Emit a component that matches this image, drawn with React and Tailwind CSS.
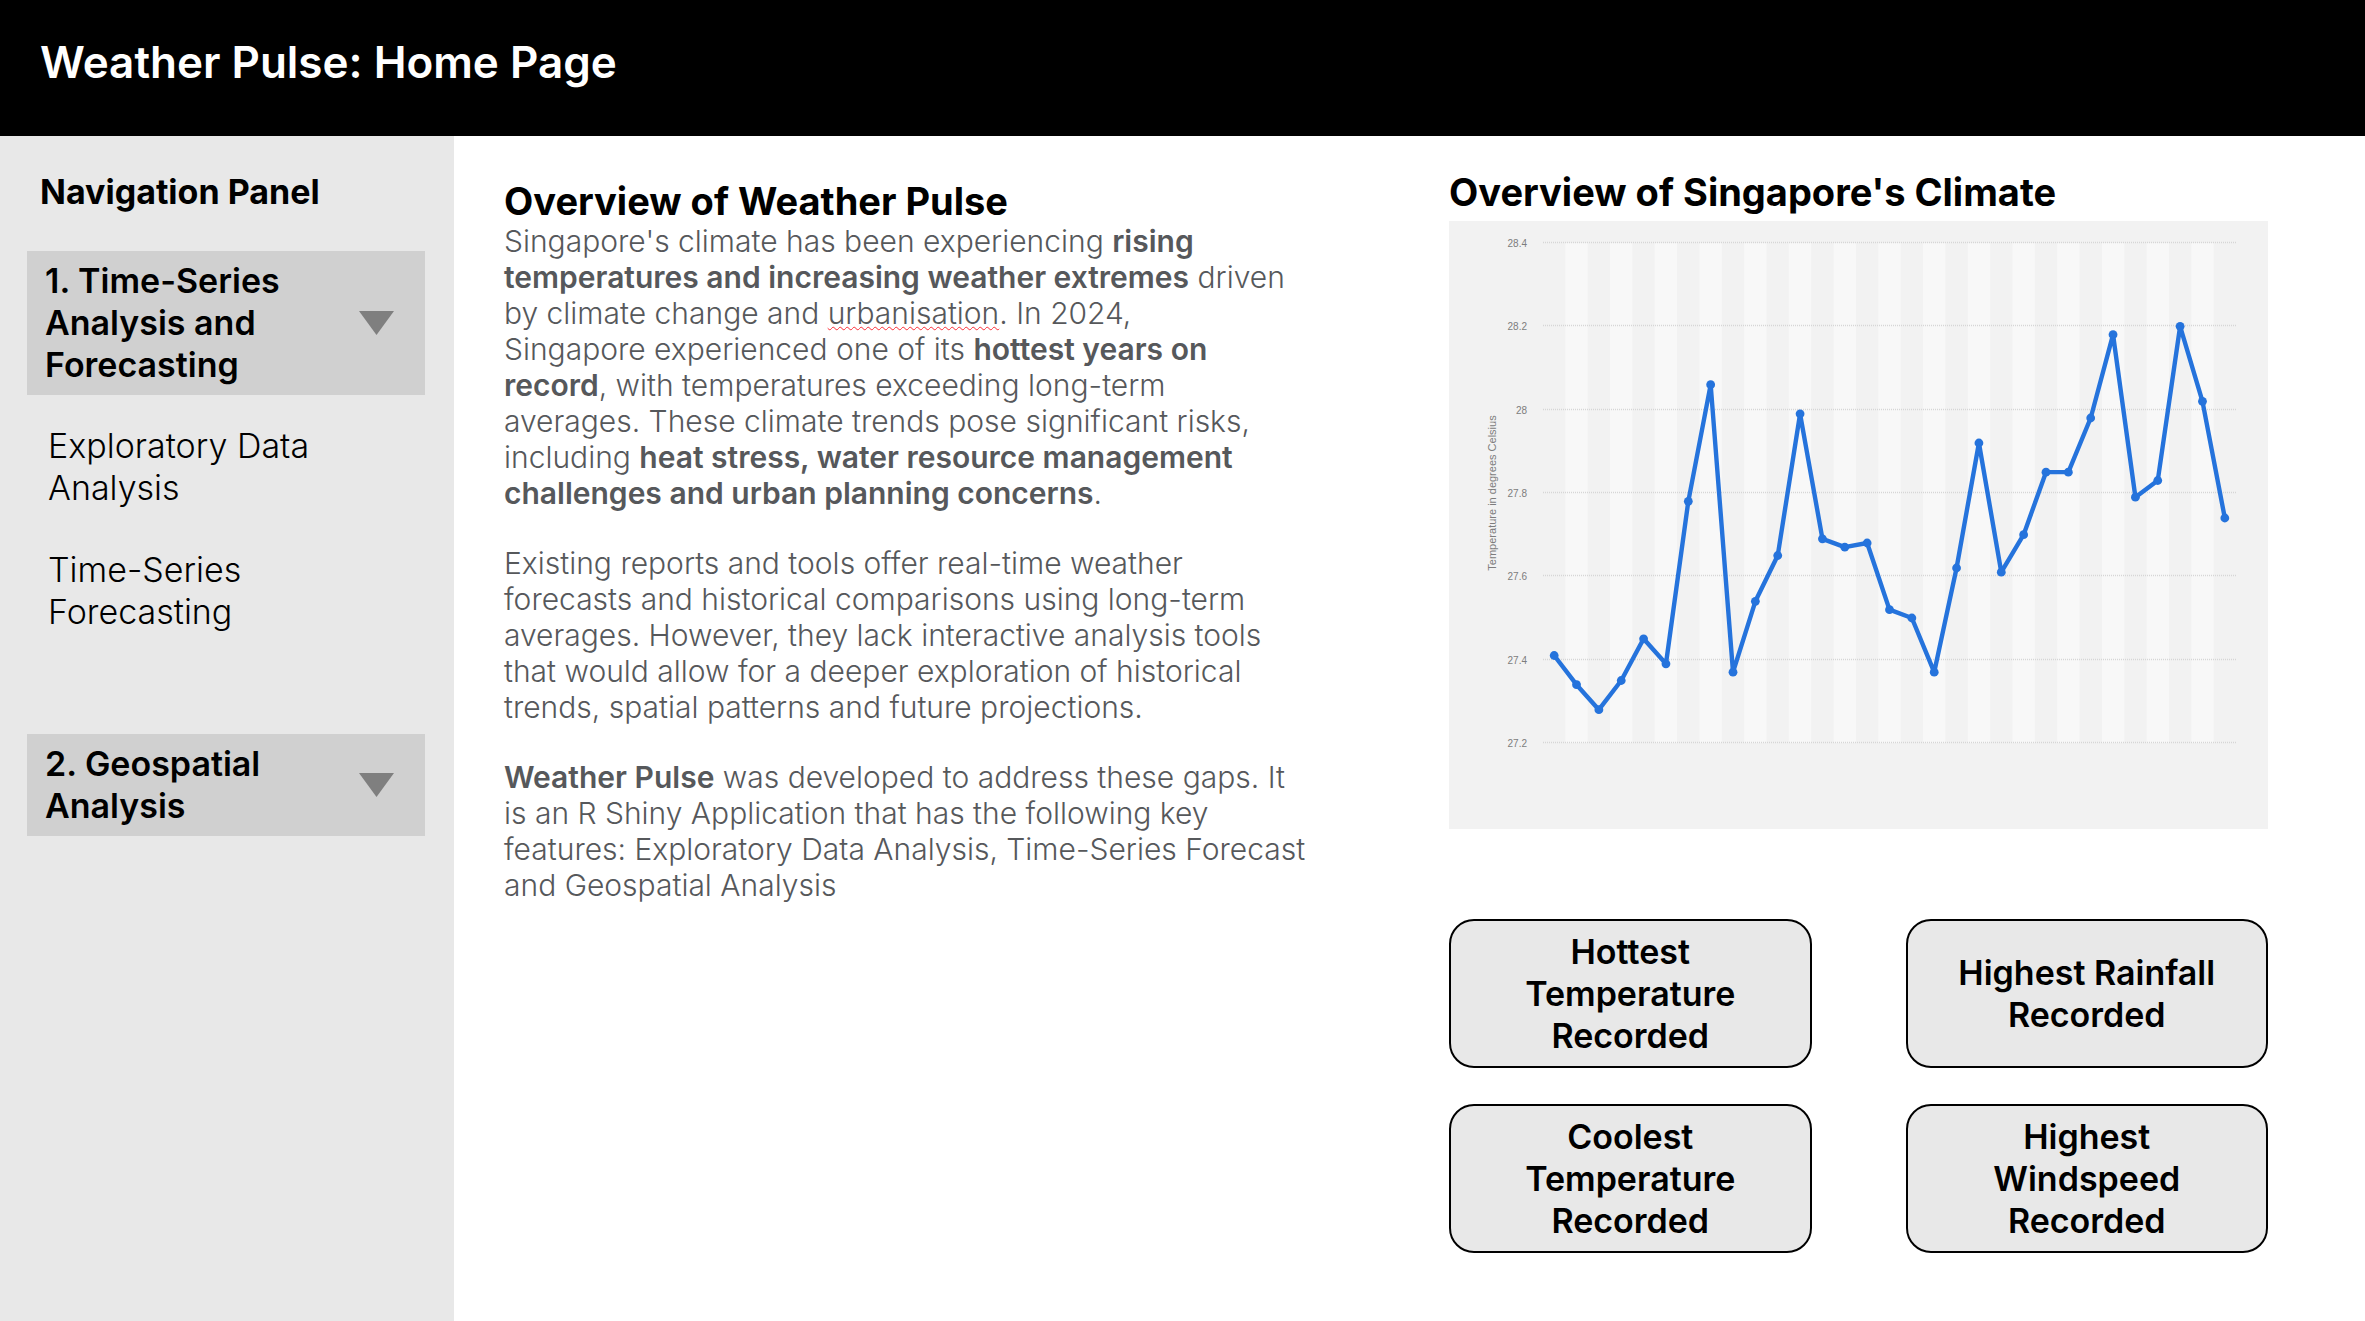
import { useState } from "react";

const READINGS = [
  27.41, 27.34, 27.28, 27.35, 27.45, 27.39, 27.78, 28.06, 27.37, 27.54, 27.65,
  27.99, 27.69, 27.67, 27.68, 27.52, 27.5, 27.37, 27.62, 27.92, 27.61, 27.7,
  27.85, 27.85, 27.98, 28.18, 27.79, 27.83, 28.2, 28.02, 27.74,
];
const TICKS = [28.4, 28.2, 28, 27.8, 27.6, 27.4, 27.2];

const LEFT = 94;
const RIGHT = 787;
const TOP = 22;
const BOTTOM = 522;
const BAND = (RIGHT - LEFT) / READINGS.length;
const xOf = (i) => LEFT + BAND * (i + 0.5);
const yOf = (v) => BOTTOM - ((v - 27.2) / 1.2) * (BOTTOM - TOP);

function ClimateChart() {
  return (
    <svg
      viewBox="0 0 819 608"
      role="img"
      aria-label="Mean temperature in degrees Celsius"
      className="block w-full bg-[#f2f2f2]"
    >
      {READINGS.map((_, i) =>
        i % 2 === 1 ? (
          <rect key={i} x={LEFT + BAND * i} y={TOP} width={BAND} height={BOTTOM - TOP} fill="#f8f8f8" />
        ) : null
      )}
      {TICKS.map((t) => (
        <g key={t}>
          <line x1={LEFT} x2={RIGHT} y1={Math.round(yOf(t)) - 0.5} y2={Math.round(yOf(t)) - 0.5} stroke="#d6d6d6" strokeDasharray="1 1" strokeWidth="1.5" />
          <text x="78" y={yOf(t) + 4} textAnchor="end" fontSize="10" fill="#7d7d7d" fontFamily="Liberation Sans, sans-serif">
            {t}
          </text>
        </g>
      ))}
      <text transform="translate(47 272) rotate(-90)" textAnchor="middle" fontSize="11" fill="#7d7d7d" fontFamily="Liberation Sans, sans-serif">
        Temperature in degrees Celsius
      </text>
      <polyline
        points={READINGS.map((v, i) => `${xOf(i)},${yOf(v)}`).join(" ")}
        fill="none"
        stroke="#2573dc"
        strokeWidth="4.4"
        strokeLinejoin="round"
      />
      {READINGS.map((v, i) => (
        <circle key={i} cx={xOf(i)} cy={yOf(v)} r="4.4" fill="#2573dc" />
      ))}
    </svg>
  );
}

function NavSection({ open, onToggle, children }) {
  return (
    <button
      type="button"
      aria-expanded={open}
      onClick={onToggle}
      className="flex w-full items-center justify-between bg-[#d0d0d0] py-[9px] pr-[31px] pl-[18px] text-left text-[34px] leading-[42px] font-semibold"
    >
      <span>{children}</span>
      <svg viewBox="0 0 35 24" className="h-6 w-[35px] shrink-0" aria-hidden="true">
        <path d="M0 0H35L17.5 24Z" fill="#7f7f7f" />
      </svg>
    </button>
  );
}

function RecordButton({ children }) {
  return (
    <button
      type="button"
      className="flex h-[149px] items-center justify-center rounded-[25px] border-2 border-black bg-[#e8e8e8] text-center text-[34px] leading-[42px] font-semibold"
    >
      <span>{children}</span>
    </button>
  );
}

export default function App() {
  const [openFirst, setOpenFirst] = useState(true);
  const [openSecond, setOpenSecond] = useState(false);

  return (
    <div className="flex min-h-screen flex-col bg-white font-['Inter',sans-serif] text-black">
      <header className="flex h-[136px] items-center bg-black px-10 pb-3">
        <h1 className="text-[44px] leading-[52px] font-semibold text-white">Weather Pulse: Home Page</h1>
      </header>

      <div className="flex grow">
        <nav aria-label="Navigation Panel" className="w-[454px] shrink-0 bg-[#e8e8e8] pt-[35px] pr-[29px] pl-[27px]">
          <h2 className="pl-[13px] text-[34px] leading-[42px] font-bold">Navigation Panel</h2>
          <div className="mt-[38px] min-h-[483px]">
            <NavSection open={openFirst} onToggle={() => setOpenFirst(!openFirst)}>
              1. Time-Series
              <br />
              Analysis and
              <br />
              Forecasting
            </NavSection>
            {openFirst && (
              <ul className="mt-[30px] flex flex-col gap-10 pl-[21px] text-[34px] leading-[42px] font-light">
                <li>
                  <a href="#exploratory">
                    Exploratory Data
                    <br />
                    Analysis
                  </a>
                </li>
                <li>
                  <a href="#forecasting">
                    Time-Series
                    <br />
                    Forecasting
                  </a>
                </li>
              </ul>
            )}
          </div>
          <NavSection open={openSecond} onToggle={() => setOpenSecond(!openSecond)}>
            2. Geospatial
            <br />
            Analysis
          </NavSection>
        </nav>

        <main className="grid grow grid-cols-[945fr_819fr] items-start pr-[97px] pl-[50px]">
          <article className="pt-[43px]">
            <h2 className="text-[38px] leading-[44px] font-bold">Overview of Weather Pulse</h2>
            <div className="flex flex-col gap-[34px] text-[30px] leading-9 font-light whitespace-nowrap text-[#56585b] [&_b]:font-semibold">
              <p>
                Singapore's climate has been experiencing <b>rising</b>
                <br />
                <b>temperatures and increasing weather extremes</b> driven
                <br />
                by climate change and{" "}
                <span className="underline decoration-red-500 decoration-wavy decoration-1 underline-offset-2">urbanisation</span>. In 2024,
                <br />
                Singapore experienced one of its <b>hottest years on</b>
                <br />
                <b>record</b>, with temperatures exceeding long-term
                <br />
                averages. These climate trends pose significant risks,
                <br />
                including <b>heat stress, water resource management</b>
                <br />
                <b>challenges and urban planning concerns</b>.
              </p>
              <p>
                Existing reports and tools offer real-time weather
                <br />
                forecasts and historical comparisons using long-term
                <br />
                averages. However, they lack interactive analysis tools
                <br />
                that would allow for a deeper exploration of historical
                <br />
                trends, spatial patterns and future projections.
              </p>
              <p>
                <b>Weather Pulse</b> was developed to address these gaps. It
                <br />
                is an R Shiny Application that has the following key
                <br />
                features: Exploratory Data Analysis, Time-Series Forecast
                <br />
                and Geospatial Analysis
              </p>
            </div>
          </article>

          <section className="pt-[33px]">
            <h2 className="text-[38px] leading-[46px] font-bold">Overview of Singapore's Climate</h2>
            <div className="mt-[6px]">
              <ClimateChart />
            </div>
            <div className="mt-[90px] grid grid-cols-2 gap-x-[94px] gap-y-9">
              <RecordButton>
                Hottest
                <br />
                Temperature
                <br />
                Recorded
              </RecordButton>
              <RecordButton>
                Highest Rainfall
                <br />
                Recorded
              </RecordButton>
              <RecordButton>
                Coolest
                <br />
                Temperature
                <br />
                Recorded
              </RecordButton>
              <RecordButton>
                Highest
                <br />
                Windspeed
                <br />
                Recorded
              </RecordButton>
            </div>
          </section>
        </main>
      </div>
    </div>
  );
}
